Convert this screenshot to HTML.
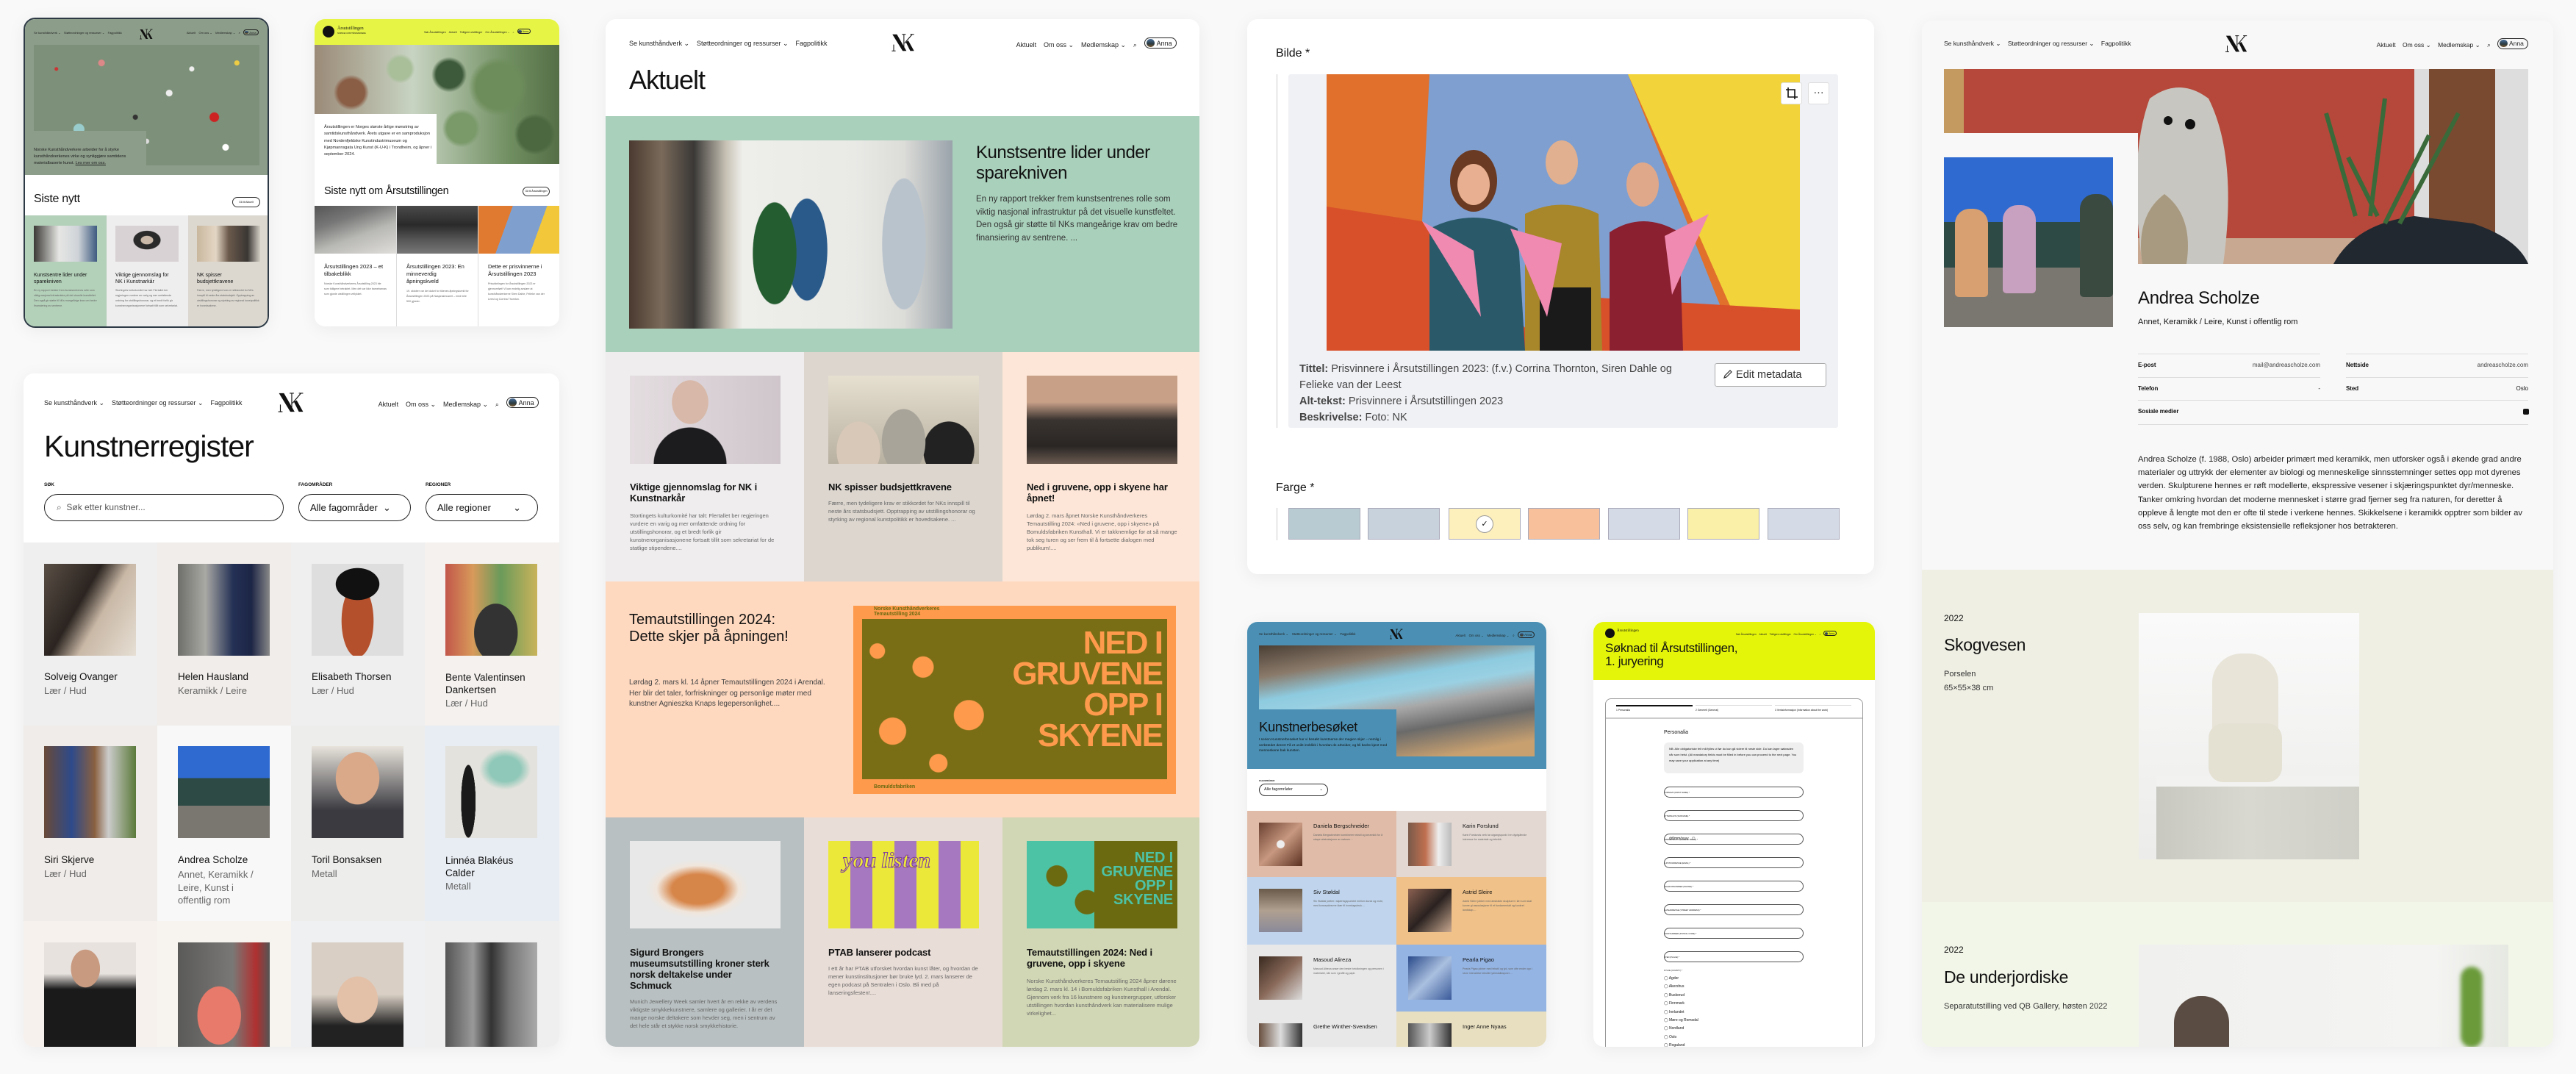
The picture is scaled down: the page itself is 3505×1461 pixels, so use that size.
<!DOCTYPE html>
<html><head><meta charset="utf-8">
<style>
*{box-sizing:border-box;margin:0;padding:0}
body{width:3505px;height:1461px;background:#f9f9f9;font-family:"Liberation Sans",sans-serif;color:#111;position:relative;overflow:hidden}
.card{position:absolute;overflow:hidden;border-radius:14px;background:#fff;box-shadow:0 4px 24px rgba(0,0,0,.06)}
.a{position:absolute}
.nav{position:absolute;display:flex;align-items:center;justify-content:space-between;color:#222;white-space:nowrap}
.nav span{margin-right:1.1em}
.nav .r span{margin-right:0;margin-left:1.1em}
.pill{border:1px solid #222;border-radius:10em;padding:.15em .6em .15em .25em;display:inline-flex;align-items:center}
.pill i{display:inline-block;width:1.2em;height:1.2em;border-radius:50%;background:linear-gradient(#4a6f9a,#2a3a40 60%,#7a5a30);margin-right:.3em}
.cell{position:absolute;overflow:hidden}
.t{font-weight:bold;letter-spacing:-.01em}
.g{color:#666}
</style></head><body>

<!-- ============ CARD 1 ============ -->
<div class="card" style="left:32px;top:24px;width:334px;height:422px;border:2px solid #2d3a45;border-radius:16px;background:#fff">
  <div class="a" style="left:0;top:0;width:330px;height:212px;background:#8c9d8a"></div>
  <div class="nav" style="left:12px;top:14px;width:306px;font-size:4px"><div><span>Se kunsthåndverk ⌄</span><span>Støtteordninger og ressurser ⌄</span><span>Fagpolitikk</span></div>
  <div class="r"><span>Aktuelt</span><span>Om oss ⌄</span><span>Medlemskap ⌄</span><span>⌕</span><span class="pill"><i></i>Anna</span></div></div>
  <svg class="a" style="left:155px;top:13px" width="20" height="15" viewBox="0 0 40 30"><path d="M3 2h7l15 26h-6z" fill="#111"/><path d="M5 18v10M2 28h6M21 2v26M18 2h6M22 16L34 2M31 2h6" stroke="#111" stroke-width="1.4" fill="none"/><path d="M24 14l4-2 9 16h-6z" fill="#111"/></svg>
  <div class="a" style="left:12px;top:35px;width:307px;height:164px;background:#7d9079;background-image:radial-gradient(circle at 10% 20%,#c33 0 2px,transparent 3px),radial-gradient(circle at 30% 15%,#d88 0 4px,transparent 5px),radial-gradient(circle at 60% 40%,#eee 0 4px,transparent 5px),radial-gradient(circle at 80% 60%,#c22 0 6px,transparent 7px),radial-gradient(circle at 20% 70%,#9cc 0 7px,transparent 8px),radial-gradient(circle at 45% 60%,#333 0 3px,transparent 4px),radial-gradient(circle at 70% 20%,#eee 0 3px,transparent 4px),radial-gradient(circle at 90% 15%,#ec4 0 3px,transparent 4px),radial-gradient(circle at 50% 80%,#ddd 0 3px,transparent 4px),radial-gradient(circle at 85% 85%,#fff 0 4px,transparent 5px)"></div>
  <div class="a" style="left:0;top:152px;width:165px;height:60px;background:#8c9d8a"></div>
  <div class="a" style="left:12px;top:174px;width:140px;font-size:5.6px;line-height:9px;color:#222">Norske Kunsthåndverkere arbeider for å styrke kunsthåndverkenes virke og synliggjøre samtidens materialbaserte kunst. <u>Les mer om oss.</u></div>
  <div class="a" style="left:12px;top:236px;font-size:16px;letter-spacing:-.3px">Siste nytt</div>
  <div class="a" style="left:282px;top:242px;width:38px;height:14px;border:1px solid #333;border-radius:7px;font-size:3.5px;text-align:center;line-height:12px">Gå til Aktuelt</div>
  <div class="cell" style="left:0;top:267px;width:111px;height:160px;background:#b3d0b9"></div>
  <div class="cell" style="left:111px;top:267px;width:111px;height:160px;background:#eeeeee"></div>
  <div class="cell" style="left:222px;top:267px;width:112px;height:160px;background:#dcd8d0"></div>
  <div class="a" style="left:12px;top:281px;width:86px;height:49px;background:linear-gradient(90deg,#3c3a36,#e6e6e4 40%,#cfd4d8 70%,#3d5a80)"></div>
  <div class="a" style="left:123px;top:281px;width:86px;height:49px;background:radial-gradient(ellipse at 50% 40%,#c9b8a8 0 8px,#2a2a2a 9px 18px,#d9d2d4 19px)"></div>
  <div class="a" style="left:234px;top:281px;width:86px;height:49px;background:linear-gradient(90deg,#c9b79e,#e3d6c4 30%,#6b5a4c 50%,#3a3633 80%,#d4cfc5)"></div>
  <div class="a" style="left:12px;top:344px;width:80px;font-size:7px;line-height:9px">Kunstsentre lider under sparekniven</div>
  <div class="a" style="left:123px;top:344px;width:80px;font-size:7px;line-height:9px">Viktige gjennomslag for NK i Kunstnarkår</div>
  <div class="a" style="left:234px;top:344px;width:80px;font-size:7px;line-height:9px">NK spisser budsjettkravene</div>
  <div class="a g" style="left:12px;top:366px;width:86px;font-size:3.6px;line-height:7px">En ny rapport trekker frem kunstsentrenes rolle som viktig nasjonal infrastruktur på det visuelle kunstfeltet. Den også gir støtte til NKs mangeårige krav om bedre finansiering av sentrene.</div>
  <div class="a g" style="left:123px;top:366px;width:86px;font-size:3.6px;line-height:7px">Stortingets kulturkomité har talt: Flertallet ber regjeringen vurdere en varig og mer omfattende ordning for utstillingshonorar, og et bredt forlik gir kunstnerorganisasjonene fortsatt tillit som sekretariat.</div>
  <div class="a g" style="left:234px;top:366px;width:86px;font-size:3.6px;line-height:7px">Færre, men tydeligere krav er stikkordet for NKs innspill til neste års statsbudsjett. Opptrapping av utstillingshonorar og styrking av regional kunstpolitikk er hovedsakene.</div>
</div>

<!-- ============ CARD 2 ============ -->
<div class="card" style="left:428px;top:26px;width:333px;height:418px">
  <div class="a" style="left:0;top:0;width:333px;height:35px;background:#e6f545"></div>
  <div class="a" style="left:11px;top:9px;width:16px;height:16px;border-radius:50%;background:#111"></div>
  <div class="a" style="left:31px;top:10px;font-size:6px;font-family:'Liberation Serif',serif">Årsutstillingen</div>
  <div class="a" style="left:31px;top:18px;font-size:2.5px">NORSKE KUNSTHÅNDVERKERE</div>
  <div class="nav" style="left:145px;top:13px;width:176px;font-size:3.6px"><div class="r"><span>Søk Årsutstillingen</span><span>Aktuelt</span><span>Tidligere utstillinger</span><span>Om Årsutstillingen ⌄</span><span>⌕</span><span class="pill"><i></i>Anna</span></div></div>
  <div class="a" style="left:0;top:35px;width:333px;height:162px;background:#d9ddd5;background-image:radial-gradient(circle at 75% 35%,#6d8d5a 0 30px,transparent 40px),radial-gradient(circle at 55% 25%,#3d5a3a 0 18px,transparent 24px),radial-gradient(circle at 15% 40%,#8a5d45 0 18px,transparent 24px),radial-gradient(circle at 35% 20%,#a8bf9a 0 15px,transparent 20px),radial-gradient(circle at 90% 75%,#4b6840 0 22px,transparent 28px),radial-gradient(circle at 60% 70%,#7a9a6a 0 20px,transparent 26px),linear-gradient(90deg,#9b8a78,#c8d4c2 40%,#6f8e60 80%,#556e46)"></div>
  <div class="a" style="left:0;top:129px;width:166px;height:68px;background:#fff"></div>
  <div class="a" style="left:13px;top:143px;width:150px;font-size:5.6px;line-height:9.3px;color:#222">Årsutstillingen er Norges største årlige mønstring av samtidskunsthåndverk. Årets utgave er en samproduksjon med Nordenfjeldske Kunstindustrimuseum og Kjøpmannsgata Ung Kunst (K-U-K) i Trondheim, og åpner i september 2024.</div>
  <div class="a" style="left:13px;top:226px;font-size:14.5px;letter-spacing:-.3px">Siste nytt om Årsutstillingen</div>
  <div class="a" style="left:283px;top:228px;width:37px;height:13px;border:1px solid #333;border-radius:7px;font-size:3.4px;text-align:center;line-height:11px">Gå til Årsutstillingen</div>
  <div class="a" style="left:0;top:254px;width:111px;height:65px;background:linear-gradient(160deg,#555 0,#777 30%,#b8b8b4 60%,#e0dedb)"></div>
  <div class="a" style="left:112px;top:254px;width:110px;height:65px;background:linear-gradient(#4a4a4a,#2a2a2a 40%,#555 70%,#777)"></div>
  <div class="a" style="left:223px;top:254px;width:110px;height:65px;background:linear-gradient(110deg,#e07a30 0 35%,#7f9fcf 35% 70%,#f2c83a 70%)"></div>
  <div class="a" style="left:111px;top:254px;width:1px;height:164px;background:#ddd"></div>
  <div class="a" style="left:222px;top:254px;width:1px;height:164px;background:#ddd"></div>
  <div class="a" style="left:13px;top:332px;width:85px;font-size:7.5px;line-height:10px">Årsutstillingen 2023 – et tilbakeblikk</div>
  <div class="a" style="left:125px;top:332px;width:85px;font-size:7.5px;line-height:10px">Årsutstillingen 2023: En minneverdig åpningskveld</div>
  <div class="a" style="left:236px;top:332px;width:85px;font-size:7.5px;line-height:10px">Dette er prisvinnerne i Årsutstillingen 2023</div>
  <div class="a g" style="left:13px;top:357px;width:85px;font-size:3.6px;line-height:7px">Norske Kunsthåndverkeres Årsutstilling 2023 ble som tidligere betraktet. Men det var ikke barnebarnas som gjorde utstillingen vellykket.</div>
  <div class="a g" style="left:125px;top:367px;width:85px;font-size:3.6px;line-height:7px">19. oktober var det duket for tidenes åpningskveld for Årsutstillingen 2023 på Nasjonalmuseet – med hele 500 gjester.</div>
  <div class="a g" style="left:236px;top:357px;width:85px;font-size:3.6px;line-height:7px">Prisutdelingen for Årsutstillingen 2023 er gjennomført! Vi kan endelig avsløre at kunsthåndverkerne Siren Dahle, Felieke van der Leest og Corrina Thornton.</div>
</div>

<!-- ============ CARD 3 Kunstnerregister ============ -->
<div class="card" style="left:32px;top:508px;width:729px;height:916px">
  <div class="nav" style="left:28px;top:32px;width:673px;font-size:9px"><div><span>Se kunsthåndverk ⌄</span><span>Støtteordninger og ressurser ⌄</span><span>Fagpolitikk</span></div>
  <div class="r"><span>Aktuelt</span><span>Om oss ⌄</span><span>Medlemskap ⌄</span><span>⌕</span><span class="pill"><i></i>Anna</span></div></div>
  <svg class="a" style="left:343px;top:25px" width="42" height="29" viewBox="0 0 40 30"><path d="M3 2h7l15 26h-6z" fill="#111"/><path d="M5 18v10M2 28h6M21 2v26M18 2h6M22 16L34 2M31 2h6" stroke="#111" stroke-width="1.2" fill="none"/><path d="M24 14l4-2 9 16h-6z" fill="#111"/></svg>
  <div class="a" style="left:28px;top:76px;font-size:41px;letter-spacing:-1px">Kunstnerregister</div>
  <div class="a t" style="left:28px;top:148px;font-size:6.5px">SØK</div>
  <div class="a t" style="left:374px;top:148px;font-size:6.5px">FAGOMRÅDER</div>
  <div class="a t" style="left:547px;top:148px;font-size:6.5px">REGIONER</div>
  <div class="a" style="left:28px;top:164px;width:326px;height:37px;border:1px solid #222;border-radius:19px;font-size:12px;line-height:35px;padding-left:16px;color:#555">⌕&nbsp; Søk etter kunstner...</div>
  <div class="a" style="left:374px;top:164px;width:153px;height:37px;border:1px solid #222;border-radius:19px;font-size:13px;line-height:35px;padding-left:15px">Alle fagområder &nbsp;⌄</div>
  <div class="a" style="left:547px;top:164px;width:153px;height:37px;border:1px solid #222;border-radius:19px;font-size:13px;line-height:35px;padding-left:15px">Alle regioner <span style="float:right;margin-right:22px">⌄</span></div>
  <div class="cell" style="left:0;top:230px;width:182px;height:249px;background:#efefef"><div class="a" style="left:28px;top:29px;width:125px;height:125px;background:linear-gradient(120deg,#5a4f46,#2b2420 40%,#c9b8a6 60%,#e6dfd4)"></div><div class="a" style="left:28px;top:175px;font-size:13.5px">Solveig Ovanger</div><div class="a g" style="left:28px;top:194px;font-size:13px">Lær / Hud</div></div>
  <div class="cell" style="left:182px;top:230px;width:182px;height:249px;background:#f1edea"><div class="a" style="left:28px;top:29px;width:125px;height:125px;background:linear-gradient(90deg,#6e6e6a,#a9a9a4 30%,#243055 60%,#1c2545 80%,#888)"></div><div class="a" style="left:28px;top:175px;font-size:13.5px">Helen Hausland</div><div class="a g" style="left:28px;top:194px;font-size:13px">Keramikk / Leire</div></div>
  <div class="cell" style="left:364px;top:230px;width:182px;height:249px;background:#efefef"><div class="a" style="left:28px;top:29px;width:125px;height:125px;background:radial-gradient(ellipse 30px 22px at 50% 22%,#111 98%,transparent),radial-gradient(ellipse 22px 50px at 50% 62%,#b5502c 98%,transparent),#dedede"></div><div class="a" style="left:28px;top:175px;font-size:13.5px">Elisabeth Thorsen</div><div class="a g" style="left:28px;top:194px;font-size:13px">Lær / Hud</div></div>
  <div class="cell" style="left:546px;top:230px;width:183px;height:249px;background:#f4f1ee"><div class="a" style="left:28px;top:29px;width:125px;height:125px;background:radial-gradient(ellipse 30px 40px at 55% 75%,#333 98%,transparent),linear-gradient(90deg,#c2574a,#d89a5a 30%,#6a9a5a 60%,#c9b35a)"></div><div class="a" style="left:28px;top:175px;font-size:13.5px;line-height:17px;width:130px">Bente Valentinsen Dankertsen</div><div class="a g" style="left:28px;top:211px;font-size:13px">Lær / Hud</div></div>
  <div class="cell" style="left:0;top:479px;width:182px;height:266px;background:#f0ece9"><div class="a" style="left:28px;top:28px;width:125px;height:125px;background:linear-gradient(90deg,#6a4a38,#2d4a8a 30%,#8a6040 55%,#ccc 70%,#5b7a3a)"></div><div class="a" style="left:28px;top:175px;font-size:13.5px">Siri Skjerve</div><div class="a g" style="left:28px;top:194px;font-size:13px">Lær / Hud</div></div>
  <div class="cell" style="left:182px;top:479px;width:182px;height:266px;background:#f8f8f8"><div class="a" style="left:28px;top:28px;width:125px;height:125px;background:linear-gradient(#2e6ad0 0 35%,#2d4a44 35% 65%,#7a7670 65%)"></div><div class="a" style="left:28px;top:175px;font-size:13.5px">Andrea Scholze</div><div class="a g" style="left:28px;top:194px;font-size:13px;line-height:17.5px;width:120px">Annet, Keramikk / Leire, Kunst i offentlig rom</div></div>
  <div class="cell" style="left:364px;top:479px;width:182px;height:266px;background:#ededec"><div class="a" style="left:28px;top:28px;width:125px;height:125px;background:radial-gradient(ellipse 30px 36px at 50% 35%,#d9a98a 98%,transparent),linear-gradient(#e8e4dc,#3a3a40 70%)"></div><div class="a" style="left:28px;top:175px;font-size:13.5px">Toril Bonsaksen</div><div class="a g" style="left:28px;top:194px;font-size:13px">Metall</div></div>
  <div class="cell" style="left:546px;top:479px;width:183px;height:266px;background:#e8edf3"><div class="a" style="left:28px;top:28px;width:125px;height:125px;background:radial-gradient(ellipse 10px 50px at 25% 60%,#1a1a1a 98%,transparent),radial-gradient(ellipse 35px 28px at 65% 25%,#8fc8b8 60%,transparent),#e3e2dc"></div><div class="a" style="left:28px;top:175px;font-size:13.5px;line-height:17px;width:130px">Linnéa Blakéus Calder</div><div class="a g" style="left:28px;top:211px;font-size:13px">Metall</div></div>
  <div class="cell" style="left:0;top:745px;width:182px;height:171px;background:#f7f1ed"><div class="a" style="left:28px;top:29px;width:125px;height:142px;background:radial-gradient(ellipse 20px 26px at 45% 25%,#c89a80 98%,transparent),linear-gradient(#e7e2de 0 30%,#1a1a1a 45%)"></div></div>
  <div class="cell" style="left:182px;top:745px;width:182px;height:171px;background:#f7f4ef"><div class="a" style="left:28px;top:29px;width:125px;height:142px;background:radial-gradient(ellipse 30px 40px at 45% 70%,#e77a6a 98%,transparent),linear-gradient(90deg,#5a5a58,#7a7876 60%,#b03030 85%,#555)"></div></div>
  <div class="cell" style="left:364px;top:745px;width:182px;height:171px;background:#eef0f2"><div class="a" style="left:28px;top:29px;width:125px;height:142px;background:radial-gradient(ellipse 28px 32px at 50% 55%,#e3c0a8 98%,transparent),linear-gradient(#d9cfc4 0 50%,#222 80%)"></div></div>
  <div class="cell" style="left:546px;top:745px;width:183px;height:171px;background:#efefef"><div class="a" style="left:28px;top:29px;width:125px;height:142px;background:linear-gradient(90deg,#555,#999 30%,#333 50%,#777 70%,#aaa)"></div></div>
</div>

<!-- ============ CARD 4 Aktuelt ============ -->
<div class="card" style="left:824px;top:26px;width:808px;height:1398px">
  <div class="nav" style="left:32px;top:25px;width:745px;font-size:9px"><div><span>Se kunsthåndverk ⌄</span><span>Støtteordninger og ressurser ⌄</span><span>Fagpolitikk</span></div>
  <div class="r"><span>Aktuelt</span><span>Om oss ⌄</span><span>Medlemskap ⌄</span><span>⌕</span><span class="pill"><i></i>Anna</span></div></div>
  <svg class="a" style="left:386px;top:19px" width="38" height="26" viewBox="0 0 40 30"><path d="M3 2h7l15 26h-6z" fill="#111"/><path d="M5 18v10M2 28h6M21 2v26M18 2h6M22 16L34 2M31 2h6" stroke="#111" stroke-width="1.2" fill="none"/><path d="M24 14l4-2 9 16h-6z" fill="#111"/></svg>
  <div class="a" style="left:32px;top:62px;font-size:36px;letter-spacing:-1px">Aktuelt</div>
  <div class="a" style="left:0;top:132px;width:808px;height:321px;background:#a9d0bb"></div>
  <div class="a" style="left:32px;top:165px;width:440px;height:256px;background:radial-gradient(ellipse 30px 70px at 45% 60%,#245d30 98%,transparent),radial-gradient(ellipse 28px 70px at 55% 58%,#2a5a8a 98%,transparent),radial-gradient(ellipse 30px 90px at 85% 55%,#b9c3cc 98%,transparent),linear-gradient(90deg,#4a3a30,#7a6a5a 10%,#3a3836 20%,#c8c2b5 30%,#eeeeea 35%,#e9e9e6 70%,#dcdcd8 85%,#9aa3ab)"></div>
  <div class="a" style="left:504px;top:168px;width:290px;font-size:24px;line-height:28px;letter-spacing:-.5px">Kunstsentre lider under sparekniven</div>
  <div class="a" style="left:504px;top:237px;width:280px;font-size:11.5px;line-height:17.5px;color:#333">En ny rapport trekker frem kunstsentrenes rolle som viktig nasjonal infrastruktur på det visuelle kunstfeltet. Den også gir støtte til NKs mangeårige krav om bedre finansiering av sentrene. ...</div>
  <div class="cell" style="left:0;top:453px;width:270px;height:312px;background:#efedee"><div class="a" style="left:33px;top:32px;width:205px;height:120px;background:radial-gradient(ellipse 25px 30px at 40% 30%,#d8b8a8 98%,transparent),radial-gradient(ellipse 50px 50px at 40% 100%,#1c1c1e 98%,transparent),linear-gradient(90deg,#e4dde0,#cfc6cb)"></div><div class="a t" style="left:33px;top:176px;width:195px;font-size:13px;line-height:15px">Viktige gjennomslag for NK i Kunstnarkår</div><div class="a g" style="left:33px;top:217px;width:205px;font-size:7.5px;line-height:11px">Stortingets kulturkomité har talt: Flertallet ber regjeringen vurdere en varig og mer omfattende ordning for utstillingshonorar, og et bredt forlik gir kunstnerorganisasjonene fortsatt tillit som sekretariat for de statlige stipendene....</div></div>
  <div class="cell" style="left:270px;top:453px;width:270px;height:312px;background:#dcd6cf"><div class="a" style="left:33px;top:32px;width:205px;height:120px;background:radial-gradient(ellipse 30px 40px at 20% 85%,#d8c8b8 98%,transparent),radial-gradient(ellipse 30px 45px at 50% 75%,#a8a49a 98%,transparent),radial-gradient(ellipse 35px 40px at 80% 85%,#222 98%,transparent),linear-gradient(#e6e0d0,#b8b0a0)"></div><div class="a t" style="left:33px;top:176px;width:205px;font-size:13px;line-height:15px">NK spisser budsjettkravene</div><div class="a g" style="left:33px;top:200px;width:205px;font-size:7.5px;line-height:11px">Færre, men tydeligere krav er stikkordet for NKs innspill til neste års statsbudsjett. Opptrapping av utstillingshonorar og styrking av regional kunstpolitikk er hovedsakene. ...</div></div>
  <div class="cell" style="left:540px;top:453px;width:268px;height:312px;background:#fde6d7"><div class="a" style="left:33px;top:32px;width:205px;height:120px;background:linear-gradient(#c8a088 0 30%,#3a3430 50%,#2a2624 80%,#6a5a50)"></div><div class="a t" style="left:33px;top:176px;width:195px;font-size:13px;line-height:15px">Ned i gruvene, opp i skyene har åpnet!</div><div class="a g" style="left:33px;top:217px;width:205px;font-size:7.5px;line-height:11px">Lørdag 2. mars åpnet Norske Kunsthåndverkeres Temautstilling 2024: «Ned i gruvene, opp i skyene» på Bomuldsfabriken Kunsthall. Vi er takknemlige for at så mange tok seg turen og ser frem til å fortsette dialogen med publikum!....</div></div>
  <div class="a" style="left:0;top:765px;width:808px;height:321px;background:#fed8bf"></div>
  <div class="a" style="left:32px;top:806px;width:250px;font-size:20px;line-height:23px">Temautstillingen 2024: Dette skjer på åpningen!</div>
  <div class="a" style="left:32px;top:896px;width:275px;font-size:10px;line-height:14.5px;color:#444">Lørdag 2. mars kl. 14 åpner Temautstillingen 2024 i Arendal. Her blir det taler, forfriskninger og personlige møter med kunstner Agnieszka Knaps legepersonlighet....</div>
  <div class="a" style="left:337px;top:798px;width:439px;height:256px;background:#fd9a4c;overflow:hidden">
    <div class="a" style="left:12px;top:18px;width:415px;height:218px;background:#6b6a10;background-image:radial-gradient(circle at 20% 30%,#fd9a4c 0 14px,transparent 15px),radial-gradient(circle at 10% 70%,#fd9a4c 0 18px,transparent 19px),radial-gradient(circle at 35% 60%,#fd9a4c 0 20px,transparent 21px),radial-gradient(circle at 25% 90%,#fd9a4c 0 12px,transparent 13px),radial-gradient(circle at 5% 20%,#fd9a4c 0 10px,transparent 11px);opacity:.9"></div>
    <div class="a" style="left:170px;top:30px;font-size:44px;line-height:42px;font-weight:bold;color:#fd9a4c;letter-spacing:-2px;text-align:right;width:250px">NED I<br>GRUVENE<br>OPP I<br>SKYENE</div>
    <div class="a t" style="left:28px;top:1px;font-size:7px;color:#6b6a10">Norske Kunsthåndverkeres<br>Temautstilling 2024</div>
    <div class="a t" style="left:28px;top:243px;font-size:7px;color:#6b6a10">Bomuldsfabriken</div>
  </div>
  <div class="cell" style="left:0;top:1086px;width:270px;height:312px;background:#b9c0c1"><div class="a" style="left:33px;top:32px;width:205px;height:119px;background:radial-gradient(ellipse 70px 40px at 45% 55%,#d7864a 50%,#f0e6dc 80%,transparent),#e8e8e8"></div><div class="a t" style="left:33px;top:176px;width:195px;font-size:13px;line-height:15px">Sigurd Brongers museumsutstilling kroner sterk norsk deltakelse under Schmuck</div><div class="a g" style="left:33px;top:245px;width:205px;font-size:7.5px;line-height:11px">Munich Jewellery Week samler hvert år en rekke av verdens viktigste smykkekunstnere, samlere og gallerier. I år er det mange norske deltakere som hevder seg, men i sentrum av det hele står et stykke norsk smykkehistorie.</div></div>
  <div class="cell" style="left:270px;top:1086px;width:270px;height:312px;background:#e9ddd7"><div class="a" style="left:33px;top:32px;width:205px;height:119px;background:repeating-linear-gradient(90deg,#ece83a 0 30px,#a678c0 30px 60px)"><div style="font:italic bold 30px 'Liberation Serif',serif;color:#ece83a;-webkit-text-stroke:1px #7a3aa0;padding:10px 20px">you listen</div></div><div class="a t" style="left:33px;top:176px;width:205px;font-size:13px;line-height:15px">PTAB lanserer podcast</div><div class="a g" style="left:33px;top:200px;width:205px;font-size:7.5px;line-height:11px">I ett år har PTAB utforsket hvordan kunst låter, og hvordan de mener kunstinstitusjoner bør bruke lyd. 2. mars lanserer de egen podcast på Sentralen i Oslo. Bli med på lanseringsfesten!....</div></div>
  <div class="cell" style="left:540px;top:1086px;width:268px;height:312px;background:#d1d7b4"><div class="a" style="left:33px;top:32px;width:205px;height:119px;background:#4dc3a6;background-image:radial-gradient(circle at 20% 40%,#6b6a10 0 14px,transparent 15px),radial-gradient(circle at 40% 70%,#6b6a10 0 16px,transparent 17px),linear-gradient(90deg,transparent 45%,#6b6a10 45%)"><div class="a t" style="right:6px;top:14px;font-size:20px;line-height:19px;color:#4dc3a6;text-align:right">NED I<br>GRUVENE<br>OPP I<br>SKYENE</div></div><div class="a t" style="left:33px;top:176px;width:205px;font-size:13px;line-height:15px">Temautstillingen 2024: Ned i gruvene, opp i skyene</div><div class="a g" style="left:33px;top:217px;width:205px;font-size:7.5px;line-height:11px">Norske Kunsthåndverkeres Temautstilling 2024 åpner dørene lørdag 2. mars kl. 14 i Bomuldsfabriken Kunsthall i Arendal. Gjennom verk fra 16 kunstnere og kunstnergrupper, utforsker utstillingen hvordan kunsthåndverk kan materialisere mulige virkelighet...</div></div>
</div>

<!-- ============ CARD 5 Bilde ============ -->
<div class="card" style="left:1697px;top:26px;width:853px;height:755px">
  <div class="a" style="left:39px;top:38px;font-size:16px">Bilde *</div>
  <div class="a" style="left:40px;top:75px;width:1px;height:481px;background:#ccc"></div>
  <div class="a" style="left:56px;top:75px;width:748px;height:481px;background:#f0f1f5;border-radius:3px"></div>
  <svg class="a" style="left:108px;top:75px" width="644" height="376" viewBox="0 0 644 376">
    <rect width="644" height="376" fill="#e0702c"/>
    <polygon points="140,0 410,0 560,376 300,376 130,200" fill="#7f9fd0"/>
    <polygon points="410,0 644,0 644,330 560,340" fill="#f2d43a"/>
    <polygon points="0,180 130,200 300,376 0,376" fill="#d8502a"/>
    <polygon points="300,300 644,320 644,376 300,376" fill="#d8502a"/>
    <ellipse cx="200" cy="145" rx="32" ry="42" fill="#6a3a22"/><ellipse cx="200" cy="150" rx="22" ry="28" fill="#e8b090"/>
    <path d="M140 210 Q200 180 260 210 L270 376 L140 376Z" fill="#2a5a6a"/>
    <ellipse cx="320" cy="120" rx="22" ry="30" fill="#e0b090"/>
    <path d="M270 190 Q320 165 370 190 L375 376 L270 376Z" fill="#a8862a"/><rect x="290" y="290" width="70" height="86" fill="#1a1a1a"/>
    <ellipse cx="430" cy="150" rx="22" ry="30" fill="#e0a88a"/>
    <path d="M385 215 Q430 185 480 215 L485 376 L385 376Z" fill="#8a2030"/>
    <path d="M130 200 L200 240 L210 330 Z" fill="#f08ab0"/><path d="M250 210 L320 230 L300 330Z" fill="#f08ab0"/><path d="M460 220 L520 190 L470 300Z" fill="#f08ab0"/>
  </svg>
  <div class="a" style="left:726px;top:86px;width:29px;height:30px;background:#fff;border:1px solid #ddd;border-radius:3px"><svg width="27" height="28" viewBox="0 0 27 28"><path d="M9 6v13h13M6 9h12v13" stroke="#111" stroke-width="1.6" fill="none"/></svg></div>
  <div class="a" style="left:763px;top:86px;width:29px;height:30px;background:#fff;border:1px solid #ddd;border-radius:3px;text-align:center;font-size:14px;line-height:24px">···</div>
  <div class="a" style="left:71px;top:465px;width:520px;font-size:14.5px;line-height:22px;color:#444"><b>Tittel:</b> Prisvinnere i Årsutstillingen 2023: (f.v.) Corrina Thornton, Siren Dahle og Felieke van der Leest<br><b>Alt-tekst:</b> Prisvinnere i Årsutstillingen 2023<br><b>Beskrivelse:</b> Foto: NK</div>
  <div class="a" style="left:636px;top:468px;width:152px;height:32px;border:1px solid #aaa;border-radius:3px;background:#fff;font-size:14.5px;line-height:30px;padding-left:10px;color:#333"><svg width="14" height="14" viewBox="0 0 14 14" style="vertical-align:-2px"><path d="M2 12l1-3 7-7 2 2-7 7z" stroke="#333" fill="none" stroke-width="1.2"/></svg> Edit metadata</div>
  <div class="a" style="left:39px;top:629px;font-size:16px">Farge *</div>
  <div class="a" style="left:40px;top:665px;width:1px;height:44px;background:#ccc"></div>
  <div class="a" style="left:56px;top:665px;width:98px;height:43px;background:#b8cbd3;border:1px solid #aab"></div>
  <div class="a" style="left:164px;top:665px;width:98px;height:43px;background:#c8d2dd;border:1px solid #aab"></div>
  <div class="a" style="left:274px;top:665px;width:98px;height:43px;background:#fef0bd;border:1px solid #aab"><div style="margin:9px auto;width:24px;height:24px;border-radius:50%;background:#fff;border:1px solid #999;font-size:11px;text-align:center;line-height:22px">✓</div></div>
  <div class="a" style="left:382px;top:665px;width:98px;height:43px;background:#f9c19b;border:1px solid #aab"></div>
  <div class="a" style="left:491px;top:665px;width:98px;height:43px;background:#d5dbe6;border:1px solid #aab"></div>
  <div class="a" style="left:599px;top:665px;width:98px;height:43px;background:#faf0a8;border:1px solid #aab"></div>
  <div class="a" style="left:708px;top:665px;width:98px;height:43px;background:#d4dbe6;border:1px solid #aab"></div>
</div>

<!-- ============ CARD 6 Kunstnerbesøket ============ -->
<div class="card" style="left:1697px;top:846px;width:407px;height:578px">
  <div class="a" style="left:0;top:0;width:407px;height:200px;background:#4b90b4"></div>
  <div class="nav" style="left:16px;top:13px;width:375px;font-size:4.4px"><div><span>Se kunsthåndverk ⌄</span><span>Støtteordninger og ressurser ⌄</span><span>Fagpolitikk</span></div>
  <div class="r"><span>Aktuelt</span><span>Om oss ⌄</span><span>Medlemskap ⌄</span><span>⌕</span><span class="pill"><i></i>Anna</span></div></div>
  <svg class="a" style="left:193px;top:9px" width="20" height="15" viewBox="0 0 40 30"><path d="M3 2h7l15 26h-6z" fill="#111"/><path d="M5 18v10M2 28h6M21 2v26M18 2h6M22 16L34 2M31 2h6" stroke="#111" stroke-width="1.4" fill="none"/><path d="M24 14l4-2 9 16h-6z" fill="#111"/></svg>
  <div class="a" style="left:16px;top:32px;width:375px;height:151px;background:linear-gradient(170deg,#4a3e34 0,#8a7a6a 20%,#8ecbe0 35%,#9ad0e2 45%,#a8a8a8 55%,#6a6a6a 70%,#c8a070 90%)"></div>
  <div class="a" style="left:0;top:119px;width:203px;height:81px;background:#4b90b4"></div>
  <div class="a" style="left:16px;top:132px;font-size:18.5px;letter-spacing:-.4px">Kunstnerbesøket</div>
  <div class="a" style="left:16px;top:157px;width:175px;font-size:4.8px;line-height:7.5px">I serien Kunstnerbesøket har vi besøkt kunstnerne der magien skjer – nemlig i verkstedet deres! Få et unikt innblikk i hvordan de arbeider, og bli bedre kjent med menneskene bak kunsten.</div>
  <div class="a t" style="left:16px;top:214px;font-size:3px">FAGOMRÅDER</div>
  <div class="a" style="left:16px;top:220px;width:94px;height:17px;border:1px solid #333;border-radius:9px;font-size:5.5px;line-height:15px;padding-left:6px">Alle fagområder <span style="float:right;margin-right:6px">⌄</span></div>
  <div class="cell" style="left:0;top:257px;width:203px;height:90px;background:#e0bca8"><div class="a" style="left:16px;top:16px;width:59px;height:59px;background:radial-gradient(circle at 50% 50%,#eee 0 5px,transparent 6px),linear-gradient(135deg,#6a4030,#c89880 50%,#5a3020)"></div><div class="a" style="left:90px;top:16px;font-size:7.5px">Daniela Bergschneider</div><div class="a g" style="left:90px;top:30px;width:100px;font-size:3.6px;line-height:6px">Daniela Bergschneider kombinerer tekstil og keramikk for å skape abstraksjoner av naturen....</div></div>
  <div class="cell" style="left:203px;top:257px;width:204px;height:90px;background:#e3d8d2"><div class="a" style="left:16px;top:16px;width:59px;height:59px;background:linear-gradient(90deg,#7a5a4a,#c07050 40%,#eee 70%,#bbb)"></div><div class="a" style="left:90px;top:16px;font-size:7.5px">Karin Forslund</div><div class="a g" style="left:90px;top:30px;width:100px;font-size:3.6px;line-height:6px">Karin Forslunds verk tar utgangspunkt i en dyptgående interesse for materiale og teknikk.</div></div>
  <div class="cell" style="left:0;top:347px;width:203px;height:92px;background:#c0d5ed"><div class="a" style="left:16px;top:16px;width:59px;height:59px;background:linear-gradient(#6a5a4a,#b0a090 50%,#8a8a9a)"></div><div class="a" style="left:90px;top:16px;font-size:7.5px">Siv Støldal</div><div class="a g" style="left:90px;top:30px;width:100px;font-size:3.6px;line-height:6px">Siv Støldal jobber i skjæringspunktet mellom kunst og mote, med konseptdrevne klær til hverdagsbruk....</div></div>
  <div class="cell" style="left:203px;top:347px;width:204px;height:92px;background:#f0c188"><div class="a" style="left:16px;top:16px;width:59px;height:59px;background:linear-gradient(135deg,#8a6050,#2a2220 50%,#c8a890)"></div><div class="a" style="left:90px;top:16px;font-size:7.5px">Astrid Sleire</div><div class="a g" style="left:90px;top:30px;width:100px;font-size:3.6px;line-height:6px">Astrid Sleire jobber med abstrakte skulpturer i lær som skal kunne gi assosiasjoner til et fundamentalt og konkret landskap....</div></div>
  <div class="cell" style="left:0;top:439px;width:203px;height:91px;background:#e8e8e8"><div class="a" style="left:16px;top:16px;width:59px;height:59px;background:linear-gradient(135deg,#3a2a20,#8a6a5a 50%,#ddd)"></div><div class="a" style="left:90px;top:16px;font-size:7.5px">Masoud Alireza</div><div class="a g" style="left:90px;top:30px;width:100px;font-size:3.6px;line-height:6px">Masoud Alireza anser den beste fortolkningen og personen i materialet, slik som i grafitt og papir.</div></div>
  <div class="cell" style="left:203px;top:439px;width:204px;height:91px;background:#94b4e4"><div class="a" style="left:16px;top:16px;width:59px;height:59px;background:linear-gradient(135deg,#2a4a8a,#aac0e0 50%,#3a5a9a)"></div><div class="a" style="left:90px;top:16px;font-size:7.5px">Pearla Pigao</div><div class="a g" style="left:90px;top:30px;width:100px;font-size:3.6px;line-height:6px">Pearla Pigao jobber med tekstil og lyd, som ofte ender opp i store interaktive tekstile lydinstallasjoner....</div></div>
  <div class="cell" style="left:0;top:530px;width:203px;height:48px;background:#e8e8e8"><div class="a" style="left:16px;top:16px;width:59px;height:40px;background:linear-gradient(90deg,#6a5040,#ddd 50%,#333)"></div><div class="a" style="left:90px;top:16px;font-size:7.5px">Grethe Winther-Svendsen</div></div>
  <div class="cell" style="left:203px;top:530px;width:204px;height:48px;background:#e8dfc0"><div class="a" style="left:16px;top:16px;width:59px;height:40px;background:linear-gradient(90deg,#555,#ccc 50%,#333)"></div><div class="a" style="left:90px;top:16px;font-size:7.5px">Inger Anne Nyaas</div></div>
</div>

<!-- ============ CARD 7 Søknad ============ -->
<div class="card" style="left:2168px;top:846px;width:383px;height:578px">
  <div class="a" style="left:0;top:0;width:383px;height:79px;background:#e4f50a"></div>
  <div class="a" style="left:16px;top:9px;width:13px;height:13px;border-radius:50%;background:#111"></div>
  <div class="a" style="left:32px;top:10px;font-size:5px;font-family:'Liberation Serif',serif">Årsutstillingen</div>
  <div class="nav" style="left:190px;top:12px;width:180px;font-size:3.4px"><div class="r"><span>Søk Årsutstillingen</span><span>Aktuelt</span><span>Tidligere utstillinger</span><span>Om Årsutstillingen ⌄</span><span>⌕</span><span class="pill"><i></i>Anna</span></div></div>
  <div class="a" style="left:16px;top:27px;font-size:17px;line-height:18px;letter-spacing:-.4px">Søknad til Årsutstillingen,<br>1. juryering</div>
  <div class="a" style="left:16px;top:104px;width:351px;height:480px;border:1px solid #999;border-radius:8px 8px 0 0"></div>
  <div class="a" style="left:31px;top:113px;width:104px;height:2px;background:#111"></div>
  <div class="a" style="left:139px;top:113px;width:104px;height:1px;background:#ddd"></div>
  <div class="a" style="left:247px;top:113px;width:104px;height:1px;background:#ddd"></div>
  <div class="a" style="left:31px;top:118px;font-size:3.4px">1 Personalia</div>
  <div class="a" style="left:139px;top:118px;font-size:3.4px">2 Generelt (General)</div>
  <div class="a" style="left:247px;top:118px;font-size:3.4px">3 Verksinformasjon (Information about the work)</div>
  <div class="a" style="left:17px;top:130px;width:349px;height:2px;background:#ccc"></div>
  <div class="a" style="left:96px;top:147px;font-size:7px">Personalia</div>
  <div class="a" style="left:96px;top:164px;width:190px;height:42px;background:#efefef;border-radius:6px;padding:5px 7px;font-size:4px;line-height:8px">NB: Alle obligatoriske felt må fylles ut før du kan gå videre til neste side. Du kan lagre søknaden når som helst. (All mandatory fields must be filled in before you can proceed to the next page. You may save your application at any time)</div>
  <div class="a" style="left:96px;top:216px;width:195px;font-size:2.8px;line-height:32px">FORNAVN (FIRST NAME) *<br>ETTERNAVN (SURNAME) *<br>FØDSELSDATO (DATE OF BIRTH) *<br>E-POSTADRESSE (EMAIL) *<br>TELEFONNUMMER (PHONE) *<br>GATEADRESSE (STREET ADDRESS) *<br>POSTNUMMER (POSTAL CODE) *<br>STED (PLACE) *</div>
  <div class="a" style="left:96px;top:224px;width:190px;height:15px;border:1px solid #555;border-radius:8px"></div>
  <div class="a" style="left:96px;top:256px;width:190px;height:15px;border:1px solid #555;border-radius:8px"></div>
  <div class="a" style="left:96px;top:288px;width:190px;height:15px;border:1px solid #555;border-radius:8px;font-size:5px;line-height:13px;padding-left:6px">dd/mm/yyyy &nbsp; ▢</div>
  <div class="a" style="left:96px;top:320px;width:190px;height:15px;border:1px solid #555;border-radius:8px"></div>
  <div class="a" style="left:96px;top:352px;width:190px;height:15px;border:1px solid #555;border-radius:8px"></div>
  <div class="a" style="left:96px;top:384px;width:190px;height:15px;border:1px solid #555;border-radius:8px"></div>
  <div class="a" style="left:96px;top:416px;width:190px;height:15px;border:1px solid #555;border-radius:8px"></div>
  <div class="a" style="left:96px;top:448px;width:190px;height:15px;border:1px solid #555;border-radius:8px"></div>
  <div class="a" style="left:96px;top:472px;font-size:2.8px">FYLKE (COUNTY) *</div>
  <div class="a" style="left:96px;top:480px;font-size:5px;line-height:11.4px">◯ Agder<br>◯ Akershus<br>◯ Buskerud<br>◯ Finnmark<br>◯ Innlandet<br>◯ Møre og Romsdal<br>◯ Nordland<br>◯ Oslo<br>◯ Rogaland</div>
</div>

<!-- ============ CARD 8 Andrea Scholze ============ -->
<div class="card" style="left:2615px;top:28px;width:859px;height:1396px;background:#f8f8f8">
  <div class="nav" style="left:30px;top:24px;width:795px;font-size:8.5px"><div><span>Se kunsthåndverk ⌄</span><span>Støtteordninger og ressurser ⌄</span><span>Fagpolitikk</span></div>
  <div class="r"><span>Aktuelt</span><span>Om oss ⌄</span><span>Medlemskap ⌄</span><span>⌕</span><span class="pill"><i></i>Anna</span></div></div>
  <svg class="a" style="left:409px;top:19px" width="38" height="25" viewBox="0 0 40 30"><path d="M3 2h7l15 26h-6z" fill="#111"/><path d="M5 18v10M2 28h6M21 2v26M18 2h6M22 16L34 2M31 2h6" stroke="#111" stroke-width="1.2" fill="none"/><path d="M24 14l4-2 9 16h-6z" fill="#111"/></svg>
  <svg class="a" style="left:30px;top:66px" width="795" height="265" viewBox="0 0 795 265">
    <rect width="795" height="265" fill="#b5483a"/>
    <rect width="27" height="90" fill="#c49a60"/>
    <rect x="640" width="155" height="265" fill="#ddd"/>
    <rect x="660" width="90" height="265" fill="#7a4a30"/>
    <rect x="0" y="230" width="640" height="35" fill="#c8a890"/>
    <path d="M270 265 Q250 120 280 40 Q320 10 360 40 Q400 120 380 265Z" fill="#c8c6c0"/>
    <path d="M270 265 Q260 200 300 170 Q340 200 330 265Z" fill="#a89a80"/>
    <circle cx="305" cy="70" r="6" fill="#111"/><circle cx="335" cy="75" r="7" fill="#111"/>
    <path d="M530 265 Q560 210 640 200 L720 210 Q780 230 795 265Z" fill="#222830"/>
    <path d="M560 200 L520 60 M580 200 L600 40 M600 210 L660 90 M620 210 L700 60 M590 200 L550 120" stroke="#3a6a3a" stroke-width="6" fill="none"/>
  </svg>
  <div class="a" style="left:0;top:153px;width:294px;height:180px;background:#f8f8f8"></div>
  <div class="a" style="left:30px;top:186px;width:230px;height:231px;background:linear-gradient(#2e6ad0 0 38%,#2d4a44 38% 65%,#7a7670 65%)"><div class="a" style="left:15px;top:70px;width:45px;height:120px;background:#d8a070;border-radius:20px 20px 5px 5px"></div><div class="a" style="left:80px;top:65px;width:45px;height:120px;background:#c8a0c0;border-radius:20px 20px 5px 5px"></div><div class="a" style="left:185px;top:50px;width:45px;height:140px;background:#3a4a40;border-radius:20px 20px 5px 5px"></div></div>
  <div class="a" style="left:294px;top:364px;font-size:24px;letter-spacing:-.3px">Andrea Scholze</div>
  <div class="a" style="left:294px;top:404px;font-size:11px">Annet, Keramikk / Leire, Kunst i offentlig rom</div>
  <div class="a" style="left:294px;top:453px;width:248px;height:1px;background:#ddd"></div><div class="a" style="left:577px;top:453px;width:248px;height:1px;background:#ddd"></div>
  <div class="a" style="left:294px;top:485px;width:248px;height:1px;background:#ddd"></div><div class="a" style="left:577px;top:485px;width:248px;height:1px;background:#ddd"></div>
  <div class="a" style="left:294px;top:516px;width:531px;height:1px;background:#ddd"></div>
  <div class="a" style="left:294px;top:549px;width:531px;height:1px;background:#ddd"></div>
  <div class="a t" style="left:294px;top:464px;font-size:8px">E-post</div><div class="a" style="left:294px;top:464px;width:248px;text-align:right;font-size:8px;color:#444">mail@andreascholze.com</div>
  <div class="a t" style="left:577px;top:464px;font-size:8px">Nettside</div><div class="a" style="left:577px;top:464px;width:248px;text-align:right;font-size:8px;color:#444">andreascholze.com</div>
  <div class="a t" style="left:294px;top:496px;font-size:8px">Telefon</div><div class="a" style="left:294px;top:496px;width:248px;text-align:right;font-size:8px">-</div>
  <div class="a t" style="left:577px;top:496px;font-size:8px">Sted</div><div class="a" style="left:577px;top:496px;width:248px;text-align:right;font-size:8px">Oslo</div>
  <div class="a t" style="left:294px;top:527px;font-size:8px">Sosiale medier</div><div class="a" style="left:818px;top:528px;width:8px;height:8px;background:#111;border-radius:2px"></div>
  <div class="a" style="left:294px;top:588px;width:535px;font-size:11.3px;line-height:18.2px;color:#222">Andrea Scholze (f. 1988, Oslo) arbeider primært med keramikk, men utforsker også i økende grad andre materialer og uttrykk der elementer av biologi og menneskelige sinnsstemninger settes opp mot dyrenes verden. Skulpturene hennes er røft modellerte, ekspressive vesener i skjæringspunktet dyr/menneske. Tanker omkring hvordan det moderne mennesket i større grad fjerner seg fra naturen, for deretter å oppleve å lengte mot den er ofte til stede i verkene hennes. Skikkelsene i keramikk opptrer som bilder av oss selv, og kan frembringe eksistensielle refleksjoner hos betrakteren.</div>
  <div class="a" style="left:0;top:747px;width:859px;height:452px;background:#efefe4"></div>
  <div class="a" style="left:30px;top:806px;font-size:12px">2022</div>
  <div class="a" style="left:30px;top:836px;font-size:23px;letter-spacing:-.3px">Skogvesen</div>
  <div class="a" style="left:30px;top:880px;font-size:11px;line-height:19px;color:#333">Porselen<br>65×55×38 cm</div>
  <div class="a" style="left:295px;top:806px;width:300px;height:335px;background:linear-gradient(#fafafa,#ececea)">
    <div class="a" style="left:24px;top:230px;width:276px;height:105px;background:linear-gradient(90deg,#c8c8c0,#d8d8d0 45%,#cfcfc8)"></div>
    <div class="a" style="left:24px;top:222px;width:276px;height:14px;background:#f2f2f0"></div>
    <div class="a" style="left:100px;top:55px;width:90px;height:120px;background:#e8e4d8;border-radius:40px 40px 20px 20px"></div>
    <div class="a" style="left:95px;top:150px;width:100px;height:80px;background:#e4e0d2;border-radius:20px"></div>
  </div>
  <div class="a" style="left:0;top:1199px;width:859px;height:197px;background:#f2f6e8"></div>
  <div class="a" style="left:30px;top:1257px;font-size:12px">2022</div>
  <div class="a" style="left:30px;top:1288px;font-size:23px;letter-spacing:-.3px">De underjordiske</div>
  <div class="a" style="left:30px;top:1332px;width:230px;font-size:11px;line-height:19px;color:#333">Separatutstilling ved QB Gallery, høsten 2022</div>
  <div class="a" style="left:295px;top:1257px;width:503px;height:139px;background:linear-gradient(90deg,#f0f0ee,#f4f4f2 80%,#e6e8e2)">
    <div class="a" style="left:48px;top:70px;width:75px;height:80px;background:#5a4c42;border-radius:36px 36px 0 0"></div>
    <div class="a" style="left:438px;top:30px;width:30px;height:110px;background:#6a9a3a;border-radius:15px;filter:blur(3px)"></div>
  </div>
</div>

</body></html>
